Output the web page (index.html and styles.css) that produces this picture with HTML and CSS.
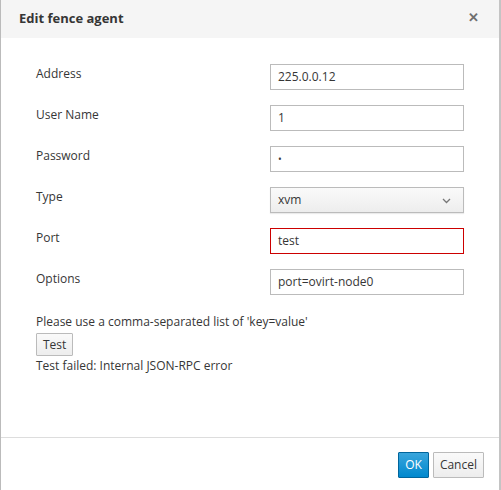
FILE: index.html
```html
<!DOCTYPE html>
<html>
<head>
<meta charset="utf-8">
<link rel="stylesheet" href="styles.css">
</head>
<body>
<div class="dialog">
  <div class="header">
    <span class="title">Edit fence agent</span>
    <span class="close">&#x2715;</span>
  </div>
  <div class="body">
    <div class="form">
      <div class="row"><label>Address</label><div class="input">225.0.0.12</div></div>
      <div class="row"><label>User Name</label><div class="input">1</div></div>
      <div class="row"><label>Password</label><div class="input pw">&bull;</div></div>
      <div class="row"><label>Type</label>
        <div class="select">xvm
          <svg class="chev" width="9" height="6" viewBox="0 0 9 6"><path d="M1 1 L4.5 4.5 L8 1" fill="none" stroke="#777" stroke-width="1.3"/></svg>
        </div>
      </div>
      <div class="row"><label>Port</label><div class="input error">test</div></div>
      <div class="row"><label>Options</label><div class="input">port=ovirt-node0</div></div>
    </div>
    <div class="hint">Please use a comma-separated list of 'key=value'</div>
    <button class="btn test">Test</button>
    <div class="result">Test failed: Internal JSON-RPC error</div>
  </div>
  <div class="footer">
    <button class="btn primary">OK</button>
    <button class="btn">Cancel</button>
  </div>
</div>
</body>
</html>
```

FILE: styles.css
```css
html, body {
  margin: 0;
  padding: 0;
  background: #fff;
}
body {
  font-family: "Open Sans", "Liberation Sans", sans-serif;
  font-size: 12px;
  color: #363636;
}
.dialog {
  width: 498px;
  height: 490px;
  border-left: 1px solid #bbb;
  border-right: 2px solid #c4c4c4;
  display: flex;
  flex-direction: column;
  box-sizing: content-box;
}
.header {
  height: 38px;
  background: #f5f5f5;
  display: flex;
  align-items: center;
  justify-content: space-between;
  padding: 0 20px 0 18px;
  flex-shrink: 0;
}
.title {
  font-size: 13px;
  font-weight: 700;
  color: #363636;
  margin-top: -2px;
}
.close {
  font-size: 13px;
  font-weight: 700;
  color: #6f6f6f;
  margin-top: -4px;
}
.body {
  flex: 1;
  padding: 26px 0 0 35px;
  border-bottom: 1px solid #ddd;
}
.form {
  display: flex;
  flex-direction: column;
  gap: 15px;
}
.row {
  display: flex;
  align-items: center;
  height: 26px;
}
.row label {
  width: 234px;
  margin-top: -8px;
}
.input, .select {
  width: 194px;
  height: 26px;
  box-sizing: border-box;
  border: 1px solid #bbb;
  padding: 0 7px;
  line-height: 24px;
  color: #363636;
  background: #fff;
}
.input.error {
  border-color: #cc0000;
}
.input.pw {
  font-size: 10px;
}
.select {
  background: linear-gradient(#fafafa, #ededed);
  box-shadow: 0 1px 1px rgba(3,3,3,0.08);
  display: flex;
  align-items: center;
  justify-content: space-between;
  padding: 0 12px 0 7px;
}
.chev {
  margin-top: 1px;
}
.hint {
  margin-top: 19px;
  line-height: 16px;
}
.btn {
  font-family: "Open Sans", "Liberation Sans", sans-serif;
  font-size: 12px;
  color: #363636;
  background: linear-gradient(#fafafa, #ededed);
  border: 1px solid #bbb;
  border-radius: 1px;
  box-sizing: border-box;
  display: block;
}
.btn.test {
  height: 23px;
  padding: 0 6px;
  margin: 3px 0 0 0;
  line-height: 21px;
}
.result {
  margin-top: 2px;
  line-height: 16px;
}
.footer {
  height: 52px;
  display: flex;
  justify-content: flex-end;
  align-items: flex-start;
  gap: 4px;
  padding: 14px 15px 0 0;
  box-sizing: border-box;
  flex-shrink: 0;
}
.footer .btn {
  height: 26px;
  margin: 0;
  padding: 0 6px;
  line-height: 24px;
}
.btn.primary {
  background: linear-gradient(#39a5dc, #0088ce);
  border-color: #00659c;
  color: #fff;
}
```
